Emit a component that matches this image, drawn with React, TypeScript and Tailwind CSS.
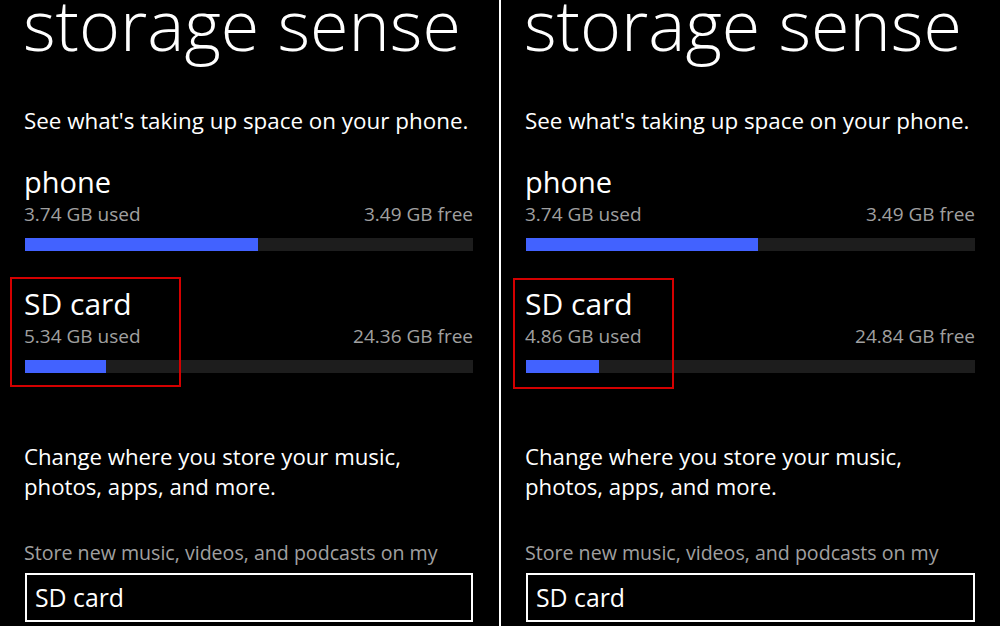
import React from "react";

type Panel = {
  phoneUsed: string;
  phoneFree: string;
  phonePct: number;
  sdUsed: string;
  sdFree: string;
  sdPct: number;
  boxLeft: number;
  boxTop: number;
  boxW: number;
  boxH: number;
};

const panels: Panel[] = [
  {
    phoneUsed: "3.74 GB used",
    phoneFree: "3.49 GB free",
    phonePct: 233,
    sdUsed: "5.34 GB used",
    sdFree: "24.36 GB free",
    sdPct: 81,
    boxLeft: 10,
    boxTop: 277,
    boxW: 171,
    boxH: 110,
  },
  {
    phoneUsed: "3.74 GB used",
    phoneFree: "3.49 GB free",
    phonePct: 232,
    sdUsed: "4.86 GB used",
    sdFree: "24.84 GB free",
    sdPct: 73,
    boxLeft: 12,
    boxTop: 278,
    boxW: 161,
    boxH: 111,
  },
];

function Bar({ w }: { w: number }) {
  return (
    <div className="mt-[12px] h-[13px] w-full bg-[#1d1d1d] flex">
      <div className="h-full bg-[#4262ff]" style={{ width: w }} />
    </div>
  );
}

function StoragePanel({ p, className }: { p: Panel; className: string }) {
  return (
    <div className={"relative h-full flex flex-col " + className}>
      <div className="h-[48px] text-[70px] leading-[48px] font-light text-white whitespace-nowrap -ml-[2px]">
        storage sense
      </div>
      <div className="mt-[58px] text-[22.4px] leading-[30px] text-white whitespace-nowrap -ml-[1px]">
        See what's taking up space on your phone.
      </div>

      <div className="mt-[28px] text-[29px] leading-[36px] text-white -ml-[1px]">phone</div>
      <div className="mt-[2px] flex justify-between text-[19px] leading-[24px] text-[#a0a0a0]">
        <span className="-ml-[1px]">{p.phoneUsed}</span>
        <span>{p.phoneFree}</span>
      </div>
      <Bar w={p.phonePct} />

      <div className="mt-[35px] text-[30px] leading-[36px] text-white -ml-[1px]">SD card</div>
      <div className="mt-[2px] flex justify-between text-[19px] leading-[24px] text-[#a0a0a0]">
        <span className="-ml-[1px]">{p.sdUsed}</span>
        <span>{p.sdFree}</span>
      </div>
      <Bar w={p.sdPct} />

      <div className="mt-[69px] text-[22.2px] leading-[30px] text-white -ml-[1px]">
        Change where you store your music,
        <br />
        photos, apps, and more.
      </div>
      <div className="mt-[39px] text-[19.6px] leading-[24px] text-[#a0a0a0] whitespace-nowrap -ml-[1px]">
        Store new music, videos, and podcasts on my
      </div>
      <div className="mt-[8px] h-[49px] border-2 border-white flex items-center pl-[8px] text-[24.8px] leading-[45px] text-white">
        SD card
      </div>

      <div
        className="absolute border-2 border-[#d40000]"
        style={{ left: p.boxLeft, top: p.boxTop, width: p.boxW, height: p.boxH }}
      />
    </div>
  );
}

export default function App() {
  return (
    <div
      className="w-[1000px] h-[626px] bg-black flex overflow-hidden"
      style={{ fontFamily: '"Open Sans", "Noto Sans", sans-serif' }}
    >
      <StoragePanel p={panels[0]} className="w-[499px] pl-[25px] pr-[26px]" />
      <div className="w-[2px] h-full bg-white" />
      <StoragePanel p={panels[1]} className="flex-1 pl-[25px] pr-[25px]" />
    </div>
  );
}
